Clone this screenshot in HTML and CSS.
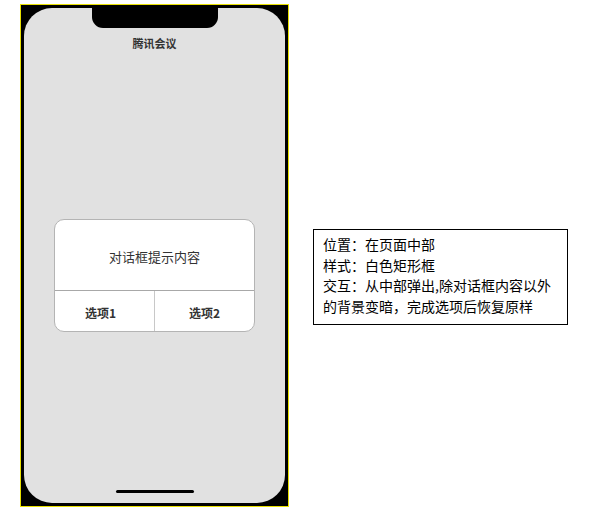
FILE: index.html
```html
<!DOCTYPE html>
<html lang="zh">
<head>
<meta charset="utf-8">
<title>对话框</title>
<link rel="stylesheet" href="styles.css">
</head>
<body>
<div class="page">
  <div class="frame">
    <div class="notch"></div>
    <div class="screen">
      <div class="title">腾讯会议</div>
      <div class="dialog">
        <div class="msg">对话框提示内容</div>
        <div class="actions">
          <div class="btn btn-left">选项1</div>
          <div class="btn btn-right">选项2</div>
        </div>
      </div>
      <div class="home-bar"></div>
    </div>
  </div>
  <div class="note">
    <div>位置：在页面中部</div>
    <div>样式：白色矩形框</div>
    <div>交互：从中部弹出,除对话框内容以外</div>
    <div>的背景变暗，完成选项后恢复原样</div>
  </div>
</div>
</body>
</html>
```
FILE: styles.css
```css
* { box-sizing: border-box; }
html, body { margin: 0; padding: 0; background: #fff; }
body {
  font-family: "Noto Sans CJK SC", "Noto Sans", sans-serif;
  color: #333;
}
.page {
  display: flex;
  align-items: flex-start;
  padding: 4px 0 0 20px;
}
.frame {
  position: relative;
  width: 269px;
  height: 503px;
  border: 1px solid #e8e000;
  background: #000;
  padding: 3px;
}
.notch {
  position: absolute;
  left: 71px;
  top: 0;
  width: 126px;
  height: 23px;
  background: #000;
  border-radius: 0 0 11px 11px;
  z-index: 2;
}
.screen {
  height: 100%;
  background: #e1e1e1;
  border-radius: 28px;
  display: flex;
  flex-direction: column;
}
.title {
  margin-top: 28px;
  height: 14px;
  line-height: 14px;
  font-size: 11px;
  font-weight: bold;
  text-align: center;
  color: #333;
}
.dialog {
  margin: 169px auto 0;
  width: 201px;
  background: #fff;
  border: 1px solid #b4b4b4;
  border-radius: 10px;
  overflow: hidden;
}
.msg {
  height: 71px;
  padding-top: 3px;
  display: flex;
  align-items: center;
  justify-content: center;
  font-size: 13px;
  color: #333;
  border-bottom: 1px solid #a8a8a8;
}
.actions {
  display: flex;
  height: 40px;
}
.btn {
  width: 99px;
  display: flex;
  align-items: center;
  justify-content: center;
  padding-top: 2px;
  font-size: 12px;
  font-weight: bold;
  color: #333;
}
.btn-left {
  padding-right: 8px;
}
.btn-right {
  width: 100px;
  border-left: 1px solid #c8c8c8;
}
.home-bar {
  margin: auto auto 10px;
  width: 78px;
  height: 3px;
  border-radius: 2px;
  background: #000;
}
.note {
  margin: 225px 0 0 24px;
  width: 255px;
  height: 96px;
  border: 1px solid #000;
  padding: 4px 0 0 9px;
  font-size: 14px;
  line-height: 20.5px;
  color: #000;
  white-space: nowrap;
}
```
